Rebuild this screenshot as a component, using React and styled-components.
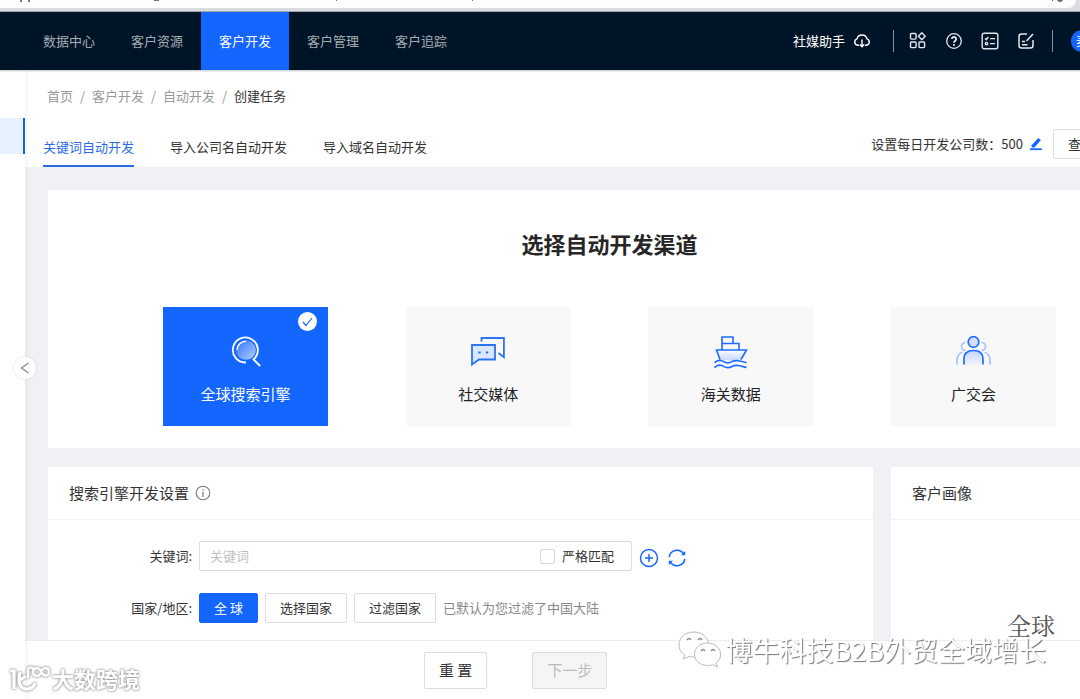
import React, { useState } from "react";
import styled, { createGlobalStyle, css } from "styled-components";

const blue = "#1366ff";

const channels = [
  { key: "search", label: "全球搜索引擎" },
  { key: "social", label: "社交媒体" },
  { key: "customs", label: "海关数据" },
  { key: "fair", label: "广交会" },
];

const menu = ["数据中心", "客户资源", "客户开发", "客户管理", "客户追踪"];
const tabs = ["关键词自动开发", "导入公司名自动开发", "导入域名自动开发"];

const CloudIcon = () => (
  <svg width="18" height="18" viewBox="0 0 18 18" fill="none" stroke="#fff" strokeWidth="1.4">
    <path d="M6 13.2H4.6A3.3 3.3 0 0 1 4 6.8 5.2 5.2 0 0 1 14 6.8a3.3 3.3 0 0 1-.6 6.4H12" />
    <path d="M9 7.5v7M6.8 12.6 9 14.8l2.2-2.2" />
  </svg>
);

const AppsIcon = () => (
  <svg width="18" height="18" viewBox="0 0 18 18" fill="none" stroke="#e4e8ec" strokeWidth="1.4">
    <rect x="1.5" y="1.5" width="5.6" height="5.6" rx="1" />
    <path d="m12.8.8 3.4 3.5-3.4 3.5-3.4-3.5z" strokeLinejoin="round" />
    <rect x="1.5" y="10" width="5.6" height="5.6" rx="1" />
    <rect x="10" y="10" width="5.6" height="5.6" rx="1" />
  </svg>
);

const HelpIcon = () => (
  <svg width="18" height="18" viewBox="0 0 18 18" fill="none" stroke="#e4e8ec">
    <circle cx="9" cy="9" r="7.3" strokeWidth="1.3" />
    <path d="M6.9 7.1a2.1 2.1 0 1 1 3.4 1.6C9.5 9.3 9 9.6 9 10.8" strokeWidth="1.8" />
    <path d="M9 12v1.7" strokeWidth="1.8" />
  </svg>
);

const ListIcon = () => (
  <svg width="18" height="18" viewBox="0 0 18 18" fill="none" stroke="#e4e8ec" strokeWidth="1.4">
    <rect x="1.2" y="1.2" width="15.6" height="15.6" rx="2" />
    <path d="m4 6.4 1.3 1.2 2-2.6M9 6.6h5M9 11.6h5" />
    <circle cx="5.5" cy="11.6" r="1.2" />
  </svg>
);

const NoteIcon = () => (
  <svg width="18" height="18" viewBox="0 0 18 18" fill="none" stroke="#e4e8ec" strokeWidth="1.5">
    <path d="M10 2H4.5A2.5 2.5 0 0 0 2 4.5v9A2.5 2.5 0 0 0 4.500 16h9a2.5 2.500 0 0 0 2.500-2.500V8" />
    <path d="m16 2-6.5 7M5 9.5h3M5 12.8h5.5" />
  </svg>
);

const PenIcon = () => (
  <svg width="14" height="14" viewBox="0 0 14 14">
    <path d="m9.300 1 2.600 2.300-6.500 7.200H2.600V8.200z" fill={blue} />
    <path d="M1 12.200h11.800" stroke={blue} strokeWidth="1.8" />
  </svg>
);

const InfoIcon = () => (
  <svg width="16" height="16" viewBox="0 0 16 16" fill="none" stroke="#777">
    <circle cx="8" cy="8" r="6.800" strokeWidth="1.1" />
    <path d="M8 6.800V12M8 4.200v1.300" strokeWidth="1.2" />
  </svg>
);

const PlusIcon = () => (
  <svg width="20" height="20" viewBox="0 0 20 20" fill="none" stroke={blue} strokeWidth="1.5">
    <circle cx="10" cy="10" r="8.500" />
    <path d="M10 6v8M6 10h8" />
  </svg>
);

const RefreshIcon = () => (
  <svg width="20" height="20" viewBox="0 0 20 20" fill="none" stroke={blue} strokeWidth="1.6">
    <path d="M2.200 9.200A8 8 0 0 1 16.600 5.600M17.800 10.800A8 8 0 0 1 3.400 14.400" />
    <path d="M18.200 3v4.200H14zM1.800 17v-4.200H6z" fill={blue} stroke="none" />
  </svg>
);

const SearchArt = () => (
  <svg width="36" height="36" viewBox="0 0 36 36" fill="none">
    <defs>
      <linearGradient id="lens" x1="0" y1="0" x2="1" y2="1">
        <stop offset="0.1" stopColor="#3c7dff" />
        <stop offset="1" stopColor="#b4ceff" />
      </linearGradient>
    </defs>
    <circle cx="18" cy="17" r="9.8" fill="url(#lens)" />
    <path d="M18 29.500A12.500 12.500 0 1 1 25.500 26.500L32.200 33" stroke="#fff" strokeWidth="1.8" />
    <path d="M9 17a9 9 0 0 1 9-8.800" stroke="#fff" strokeWidth="1.6" />
  </svg>
);

const ChatArt = () => (
  <svg width="36" height="36" viewBox="0 0 36 36" fill="none" stroke="#2b74f3" strokeWidth="1.8">
    <path d="M11.500 8.500V5h22.400v19.200l-5.400-4.200" />
    <path d="M2 12h23v14.500H9L2 31.500z" fill="#dbe7ff" />
    <path d="M9.500 18.500v2M17 18.500v2" strokeWidth="2.4" />
  </svg>
);

const ShipArt = () => (
  <svg width="36" height="36" viewBox="0 0 36 36" fill="none" stroke="#1e6bff" strokeWidth="1.6">
    <defs>
      <linearGradient id="hull" x1="0" y1="0" x2="0" y2="1">
        <stop offset="0" stopColor="#fff" />
        <stop offset="1" stopColor="#c3d2ff" />
      </linearGradient>
    </defs>
    <path d="M6.500 27.500 3.500 17h30L27 27.500q-5 1.500-10 0-5-1.600-10.500 0z" fill="url(#hull)" stroke="none" />
    <path d="M9 17V4h11v6M9 10.500h17V17" />
    <path d="M7 26.500 3.500 17h30l-5.500 9.500" />
    <path d="M1.500 29.800c3.500-3.600 7-2.600 9.500-1 3 1.700 6.500.8 8.500-.4 4-2.200 8-.4 14 1.400M1.500 34.600c3.500-3.600 7-2.600 9.500-1 3 1.700 6.500.8 8.500-.4 4-2.200 8-.4 14 1.400" />
  </svg>
);

const PeopleArt = () => (
  <svg width="36" height="36" viewBox="0 0 36 36" fill="none" strokeWidth="1.7">
    <defs>
      <linearGradient id="torso" x1="0" y1="0" x2="0" y2="1">
        <stop offset="0" stopColor="#c4d5ff" />
        <stop offset="1" stopColor="#eef3ff" />
      </linearGradient>
    </defs>
    <g stroke="#a4c3ff">
      <path d="M10.500 9.500a4 4 0 1 0 0 8M2 31.500V27q0-6 5.500-7.800M26.500 9.500a4 4 0 1 1 0 8M35 31.500V27q0-6-5.500-7.800" />
    </g>
    <circle cx="18.500" cy="9" r="5.300" fill="#d3e0ff" stroke="#1e6bff" />
    <path d="M9 31.500V26q0-8.500 9.500-8.500T28 26v5.500" fill="url(#torso)" stroke="#1e6bff" />
  </svg>
);

const art = { search: SearchArt, social: ChatArt, customs: ShipArt, fair: PeopleArt };

const App = () => {
  const [channel, setChannel] = useState("search");

  return (
    <>
      <GlobalStyle />
      <Page>
        <Browser>
          <Address>
            <svg width="500" height="3" fill="#777">
              <path d="M20 0h2v2h-2zM28 0h2v2h-2zM154 0h5v1h-5zM336 0h1v1h-1zM472 0h1v1h-1z" />
            </svg>
            <svg width="14" height="3" fill="#666">
              <path d="M2 0h1v1H2zM7 0h6q-1 2-3 2T7 0z" />
            </svg>
          </Address>
        </Browser>

        <Header>
          <Menu>
            {menu.map((item) => (
              <MenuItem key={item} href="#" $active={item === "客户开发"}>{item}</MenuItem>
            ))}
          </Menu>
          <Tools>
            <Helper href="#">社媒助手<CloudIcon /></Helper>
            <Divider />
            <ToolGroup>
              <IconButton aria-label="应用"><AppsIcon /></IconButton>
              <IconButton aria-label="帮助"><HelpIcon /></IconButton>
              <IconButton aria-label="任务"><ListIcon /></IconButton>
              <IconButton aria-label="笔记"><NoteIcon /></IconButton>
            </ToolGroup>
            <Divider />
            <Avatar>麦</Avatar>
          </Tools>
        </Header>

        <Body>
          <Sidebar>
            <SideItem />
            <Collapse aria-label="收起">
              <svg width="10" height="12" viewBox="0 0 10 12" fill="none" stroke="#888" strokeWidth="1.3">
                <path d="M8.500 1 1.500 6l7 5" />
              </svg>
            </Collapse>
          </Sidebar>

          <Main>
            <Top>
              <Crumbs>
                <a href="#">首页</a><i>/</i>
                <a href="#">客户开发</a><i>/</i>
                <a href="#">自动开发</a><i>/</i>
                <span>创建任务</span>
              </Crumbs>
              <TabBar>
                {tabs.map((tab, i) => (
                  <Tab key={tab} $active={i === 0}>{tab}</Tab>
                ))}
                <Quota>
                  <span>设置每日开发公司数：</span>
                  <b>500</b>
                  <IconButton aria-label="编辑"><PenIcon /></IconButton>
                  <Button>查看</Button>
                </Quota>
              </TabBar>
            </Top>

            <Content>
              <ChannelPanel>
                <Title>选择自动开发渠道</Title>
                <Channels>
                  {channels.map(({ key, label }) => {
                    const Art = art[key];
                    return (
                      <Channel key={key} $active={channel === key} onClick={() => setChannel(key)}>
                        <Art />
                        {label}
                        {channel === key && (
                          <Check>
                            <svg width="11" height="10" viewBox="0 0 11 10" fill="none" stroke={blue} strokeWidth="1.2">
                              <path d="m1 5 3 3.500L10 1" />
                            </svg>
                          </Check>
                        )}
                      </Channel>
                    );
                  })}
                </Channels>
              </ChannelPanel>

              <Columns>
                <Panel>
                  <PanelHead>搜索引擎开发设置<InfoIcon /></PanelHead>
                  <Form>
                    <Row>
                      <Label htmlFor="keyword">关键词:</Label>
                      <Field>
                        <input id="keyword" type="text" placeholder="关键词" />
                        <Strict><input type="checkbox" />严格匹配</Strict>
                      </Field>
                      <RowIcons>
                        <IconButton aria-label="添加"><PlusIcon /></IconButton>
                        <IconButton aria-label="刷新"><RefreshIcon /></IconButton>
                      </RowIcons>
                    </Row>
                    <Row>
                      <Label as="span">国家/地区:</Label>
                      <Button $primary>全 球</Button>
                      <Button>选择国家</Button>
                      <Button>过滤国家</Button>
                      <Hint>已默认为您过滤了中国大陆</Hint>
                    </Row>
                  </Form>
                </Panel>
                <Panel>
                  <PanelHead>客户画像</PanelHead>
                  <Cloud>全球</Cloud>
                </Panel>
              </Columns>
            </Content>

            <Footer>
              <Button $large>重 置</Button>
              <Button $large disabled>下一步</Button>
            </Footer>
          </Main>
        </Body>
      </Page>

      <AccountMark>
        <svg width="44" height="38" viewBox="0 0 44 38" fill="#fff" stroke="#aaa" strokeWidth="0.8">
          <path d="M16 1C7.500 1 1 6.500 1 14c0 4.300 2.200 7.900 6 10.200L5.200 28l5.800-2.600c2 .6 4 .8 6 .6C29 25.500 31 19 30.500 13 30 6 24 1 16 1z" />
          <path d="M29.500 12C22 12 16.500 17 16.500 23.200S22 34.500 29.500 34.500c1.700 0 3.400-.3 5-.8l5 2.300-1.400-4c2.900-2 4.500-5 4.500-8.600C42.600 17 37 12 29.500 12z" />
          <path d="M9 9q2-3 4 0M20 9q2-3 4 0M23 20q2-3 4 0M33 20q2-3 4 0" fill="none" stroke="#888" strokeWidth="1.4" />
        </svg>
        博牛科技B2B外贸全域增长
      </AccountMark>
      <SiteMark>
        <svg width="40" height="30" viewBox="0 0 40 30" fill="none" stroke="#fff" strokeWidth="3.2">
          <path d="M0 8h4v18M10 9c-2.500 11 0 17 7 17q6 0 8-6M10 17l6-4" />
          <path d="M18 15V6q2-3 6 0" strokeWidth="2.4" />
          <path d="M31 8.500c-2-5-8-4-8 .5s6 5.500 8 .5c2-6 8-5.500 8-.5s-6 4.500-8-.5z" strokeWidth="2.4" />
        </svg>
        大数跨境
      </SiteMark>
    </>
  );
};
export default App;


const GlobalStyle = createGlobalStyle`
  * {
    box-sizing: border-box;
  }

  body {
    margin: 0;
    overflow: hidden;
    background: #fff;
    color: #333;
    font-family: "Noto Sans CJK SC", sans-serif;
    font-size: 13px;
    line-height: 20px;
  }

  button, input {
    font: inherit;
    color: inherit;
  }

  a {
    color: inherit;
    text-decoration: none;
  }

  svg {
    display: block;
    flex: none;
  }
`;

/* the console keeps its desktop width and is clipped by smaller windows */
const Page = styled.div`
  display: flex;
  flex-direction: column;
  height: 100vh;
  min-width: 1194px;
`;

const Browser = styled.div`
  height: 12px;
  padding-right: 118px;
  background: #d9dce1;
  border-bottom: 1px solid #a4a8ad;
`;

const Address = styled.div`
  display: flex;
  justify-content: space-between;
  height: 8px;
  padding-right: 12px;
  background: #fdfdfd;
  border-bottom-right-radius: 8px;
`;

const Header = styled.header`
  position: relative;
  display: flex;
  align-items: center;
  justify-content: space-between;
  height: 58px;
  padding: 0 101px 0 25px;
  background: #001428;
  box-shadow: 0 1px 2px rgba(0, 20, 40, 0.25);
  z-index: 2;
`;

const Menu = styled.nav`
  display: flex;
  height: 100%;
`;

const MenuItem = styled.a`
  display: flex;
  align-items: center;
  padding: 0 18px;
  color: ${props => props.$active ? "#fff" : "#a6adb4"};
  background: ${props => props.$active ? blue : "none"};
`;

const Tools = styled.div`
  display: flex;
  align-items: center;
  gap: 18px;
`;

const Helper = styled.a`
  display: flex;
  align-items: center;
  gap: 8px;
  margin-right: 4px;
  color: #fff;
`;

const Divider = styled.span`
  width: 1px;
  height: 22px;
  background: #8a939c;
`;

const ToolGroup = styled.div`
  display: flex;
  gap: 18px;
  margin: 0 -1px 0 -3px;
`;

const IconButton = styled.button`
  display: flex;
  padding: 0;
  border: 0;
  background: none;
  cursor: pointer;
`;

const Avatar = styled.span`
  width: 22px;
  height: 22px;
  border-radius: 50%;
  background: ${blue};
  color: #fff;
  font-size: 12px;
  line-height: 22px;
  text-align: center;
`;

const Body = styled.div`
  display: flex;
  flex: 1;
  min-height: 0;
`;

const Sidebar = styled.aside`
  position: relative;
  width: 25px;
  padding-top: 48px;
  background: #fff;
  box-shadow: 0 0 8px rgba(0, 20, 60, 0.08);
  z-index: 1;
`;

const SideItem = styled.div`
  height: 36px;
  background: #e6f2ff;
  border-right: 2px solid #2261d4;
`;

const Collapse = styled.button`
  position: absolute;
  top: 287px;
  right: -11px;
  display: flex;
  align-items: center;
  justify-content: center;
  width: 22px;
  height: 22px;
  padding: 0;
  border: 0;
  border-radius: 50%;
  background: #fff;
  box-shadow: 0 0 3px rgba(0, 0, 0, 0.12);
`;

const Main = styled.main`
  display: flex;
  flex: 1;
  flex-direction: column;
  min-width: 0;
`;

const Top = styled.div`
  height: 97px;
  padding: 16px 0 0 18px;
  background: #fff;
`;

const Crumbs = styled.nav`
  display: flex;
  padding-left: 4px;
  color: #999;

  i {
    width: 19px;
    font-style: normal;
    text-align: center;
  }

  span {
    color: #333;
  }
`;

const TabBar = styled.div`
  display: flex;
  align-items: flex-end;
  gap: 36px;
  height: 61px;
`;

const Tab = styled.button`
  padding: 0 0 8px;
  border: 0;
  border-bottom: 2px solid ${props => props.$active ? "#2b6be6" : "transparent"};
  background: none;
  color: ${props => props.$active ? "#2b6be6" : "#333"};
  cursor: pointer;
`;

const Quota = styled.div`
  display: flex;
  align-items: center;
  margin-left: auto;
  padding: 0 85px 8px 0;

  b {
    margin-right: 6px;
    font-weight: 400;
  }

  ${IconButton} {
    margin-right: 10px;
  }
`;

const Button = styled.button`
  height: 30px;
  padding: 0 14px;
  border: 1px solid #dcdcdc;
  border-radius: 2px;
  background: #fff;
  color: #333;
  white-space: nowrap;
  cursor: pointer;

  ${props => props.$primary && css`
    border-color: ${blue};
    background: ${blue};
    color: #fff;
  `}

  ${props => props.$large && css`
    height: 37px;
    font-size: 15px;
  `}

  &:disabled {
    background: #f5f5f5;
    color: #bbb;
    cursor: default;
  }
`;

const Content = styled.div`
  flex: 1;
  min-height: 0;
  overflow: hidden;
  padding: 23px 23px 0;
  background: #f0f1f5;
`;

const ChannelPanel = styled.section`
  padding: 36px 115px 22px;
  background: #fff;
`;

const Title = styled.h1`
  margin: 0 0 47px;
  color: #262626;
  font-size: 22px;
  font-weight: 700;
  line-height: 34px;
  text-align: center;
`;

const Channels = styled.div`
  display: flex;
  justify-content: space-between;
`;

const Channel = styled.button`
  position: relative;
  display: flex;
  flex-direction: column;
  align-items: center;
  gap: 14px;
  width: 165px;
  height: 119px;
  padding: 26px 0 0;
  border: 0;
  background: ${props => props.$active ? blue : "#f8f8f8"};
  color: ${props => props.$active ? "#fff" : "#222"};
  font-size: 15px;
  line-height: 22px;
  cursor: pointer;
`;

const Check = styled.span`
  position: absolute;
  top: 5px;
  right: 11px;
  display: flex;
  align-items: center;
  justify-content: center;
  width: 19px;
  height: 19px;
  border-radius: 50%;
  background: #fff;
`;

const Columns = styled.div`
  display: grid;
  grid-template-columns: 1fr 280px;
  gap: 18px;
  height: 260px;
  margin-top: 19px;
`;

const Panel = styled.section`
  background: #fff;
`;

const PanelHead = styled.h2`
  display: flex;
  align-items: center;
  gap: 6px;
  height: 53px;
  margin: 0;
  padding: 0 21px;
  border-bottom: 1px solid #f3f3f3;
  font-size: 15px;
  font-weight: 400;
`;

const Form = styled.div`
  display: flex;
  flex-direction: column;
  gap: 22px;
  padding-top: 21px;
`;

const Row = styled.div`
  display: flex;
  align-items: center;
  gap: 7px;
`;

const RowIcons = styled.div`
  display: flex;
  gap: 8px;
  padding-top: 4px;
`;

const Label = styled.label`
  width: 144px;
  text-align: right;
`;

const Field = styled.div`
  display: flex;
  align-items: center;
  width: 433px;
  height: 30px;
  padding: 0 17px 0 10px;
  border: 1px solid #dcdcdc;
  border-radius: 2px;

  input[type="text"] {
    flex: 1;
    min-width: 0;
    padding: 0;
    border: 0;
    outline: none;
    background: none;

    &::placeholder {
      color: #bfbfbf;
    }
  }
`;

const Strict = styled.label`
  display: flex;
  align-items: center;
  gap: 7px;

  input {
    appearance: none;
    width: 15px;
    height: 15px;
    margin: 0;
    border: 1px solid #d9d9d9;
    border-radius: 2px;

    &:checked {
      background: ${blue};
    }
  }
`;

const Hint = styled.span`
  color: #888;
`;

const Cloud = styled.div`
  padding-top: 88px;
  color: #555;
  font-family: "Noto Serif CJK SC", "Noto Sans CJK SC", serif;
  font-size: 24px;
  line-height: 34px;
  text-align: center;
`;

const Footer = styled.footer`
  display: flex;
  align-items: center;
  gap: 45px;
  height: 59px;
  padding-left: 399px;
  border-top: 1px solid #ededed;
  background: #fff;
`;

const AccountMark = styled.div`
  position: fixed;
  right: 34px;
  bottom: 29px;
  display: flex;
  align-items: center;
  gap: 4px;
  color: #fff;
  font-size: 27px;
  line-height: 40px;
  text-shadow: 1px 1px 1px #777;
  white-space: nowrap;
  z-index: 3;
`;

const SiteMark = styled.div`
  position: fixed;
  left: 10px;
  bottom: 6px;
  display: flex;
  align-items: center;
  gap: 2px;
  color: #fff;
  font-size: 22px;
  font-weight: 700;
  line-height: 30px;
  filter: drop-shadow(0 0 1px #999) drop-shadow(0 0 1px #bbb);
  z-index: 3;
`;
